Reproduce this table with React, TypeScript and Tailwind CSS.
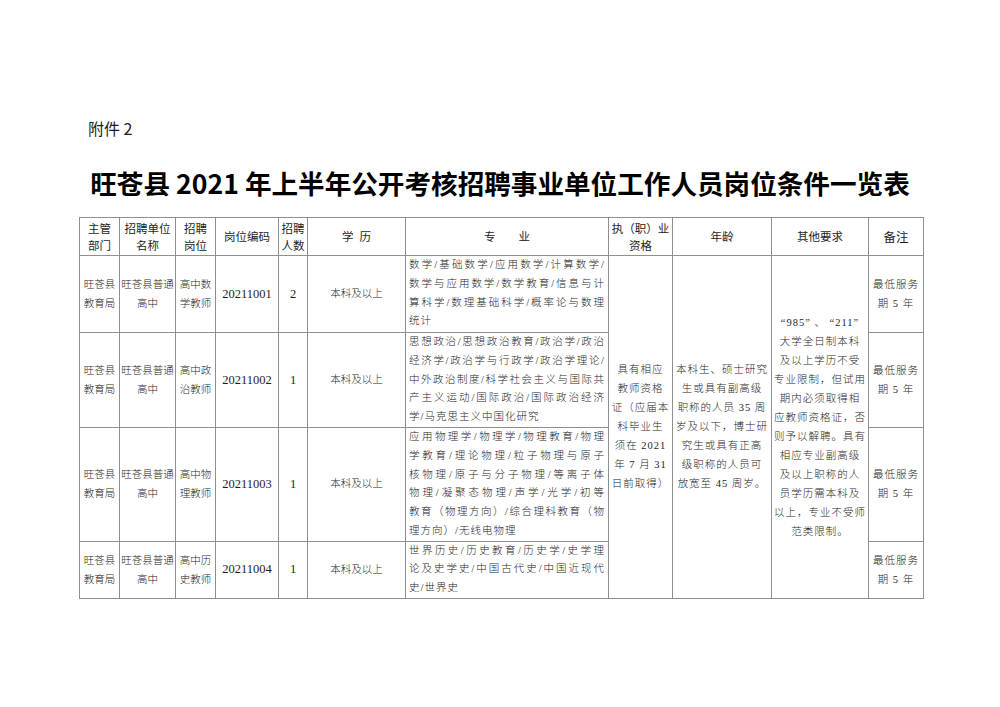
import React from "react";

const serifCjk = "font-['Liberation_Serif','Noto_Sans_CJK_SC',serif]";

const majors: string[][] = [
    [
        "数学/基础数学/应用数学/计算数学/",
        "数学与应用数学/数学教育/信息与计",
        "算科学/数理基础科学/概率论与数理",
        "统计",
    ],
    [
        "思想政治/思想政治教育/政治学/政治",
        "经济学/政治学与行政学/政治学理论/",
        "中外政治制度/科学社会主义与国际共",
        "产主义运动/国际政治/国际政治经济",
        "学/马克思主义中国化研究",
    ],
    [
        "应用物理学/物理学/物理教育/物理",
        "学教育/理论物理/粒子物理与原子",
        "核物理/原子与分子物理/等离子体",
        "物理/凝聚态物理/声学/光学/初等",
        "教育（物理方向）/综合理科教育（物",
        "理方向）/无线电物理",
    ],
    [
        "世界历史/历史教育/历史学/史学理",
        "论及史学史/中国古代史/中国近现代",
        "史/世界史",
    ],
];

const rows = [
    { post: ["高中数", "学教师"], code: "20211001", count: "2", h: "h-[77px]" },
    { post: ["高中政", "治教师"], code: "20211002", count: "1", h: "h-[95px]" },
    { post: ["高中物", "理教师"], code: "20211003", count: "1", h: "h-[113px]" },
    { post: ["高中历", "史教师"], code: "20211004", count: "1", h: "h-[57px]" },
];

const qualification = ["具有相应", "教师资格", "证（应届本", "科毕业生", "须在 2021", "年 7 月 31", "日前取得）"];

const age = [
    "本科生、硕士研究",
    "生或具有副高级",
    "职称的人员 35 周",
    "岁及以下，博士研",
    "究生或具有正高",
    "级职称的人员可",
    "放宽至 45 周岁。",
];

const other = [
    "“985” 、 “211”",
    "大学全日制本科",
    "及以上学历不受",
    "专业限制，但试用",
    "期内必须取得相",
    "应教师资格证，否",
    "则予以解聘。具有",
    "相应专业副高级",
    "及以上职称的人",
    "员学历需本科及",
    "以上，专业不受师",
    "范类限制。",
];

function Lines({ lines }: { lines: string[] }) {
    return (
        <div className="leading-[19px] tracking-[1px]">
            {lines.map((l) => (
                <div key={l} className="whitespace-pre">
                    {l}
                </div>
            ))}
        </div>
    );
}

function Major({ lines }: { lines: string[] }) {
    return (
        <div className="px-[3px] text-left leading-[18.75px] tracking-[1px] text-justify">
            {lines.map((l, i) => (
                <div key={l} className={i < lines.length - 1 ? "[text-align-last:justify]" : ""}>
                    {l}
                </div>
            ))}
        </div>
    );
}

const cell = "border border-[#8f8f8f] p-0 text-center align-middle";
const th = "border border-[#8f8f8f] p-0 text-center align-middle font-normal";

export default function App() {
    return (
        <div className="w-[1000px] h-[707px] overflow-hidden bg-white pt-[118px] text-[#1e1e1e] font-['Noto_Sans_CJK_SC',sans-serif]">
            <div className="pl-[88px] text-[16px] leading-[20px]">附件 2</div>
            <h1 className="mt-[28px] text-center text-[26.6px] leading-[34px] font-bold text-black">
                旺苍县 2021 年上半年公开考核招聘事业单位工作人员岗位条件一览表
            </h1>
            <table className="mt-[17px] ml-[79px] w-[844px] table-fixed border-collapse">
                <colgroup>
                    <col className="w-[40px]" />
                    <col className="w-[56px]" />
                    <col className="w-[40px]" />
                    <col className="w-[63px]" />
                    <col className="w-[29px]" />
                    <col className="w-[98px]" />
                    <col className="w-[203px]" />
                    <col className="w-[64px]" />
                    <col className="w-[99px]" />
                    <col className="w-[97px]" />
                    <col className="w-[55px]" />
                </colgroup>
                <thead>
                    <tr className="h-[38px] text-[11.5px] leading-[17px]">
                        <th className={th}>主管<br />部门</th>
                        <th className={th}>招聘单位<br />名称</th>
                        <th className={th}>招聘<br />岗位</th>
                        <th className={th}>岗位编码</th>
                        <th className={th}>招聘<br />人数</th>
                        <th className={th}>
                            学<span className="inline-block w-[6px]" />历
                        </th>
                        <th className={th}>专　　业</th>
                        <th className={th}>执（职）业<br />资格</th>
                        <th className={th}>年龄</th>
                        <th className={th}>其他要求</th>
                        <th className={`${th} font-bold text-[12.5px]`}>备注</th>
                    </tr>
                </thead>
                <tbody className={`${serifCjk} text-[10.5px] font-light`}>
                    {rows.map((r, i) => (
                        <tr key={r.code} className={r.h}>
                            <td className={`${cell} leading-[19px]`}>旺苍县<br />教育局</td>
                            <td className={`${cell} leading-[19px]`}>旺苍县普通<br />高中</td>
                            <td className={`${cell} leading-[19px]`}>{r.post[0]}<br />{r.post[1]}</td>
                            <td className={`${cell} text-[12.5px]`}>{r.code}</td>
                            <td className={`${cell} text-[12.5px]`}>{r.count}</td>
                            <td className={cell}>本科及以上</td>
                            <td className={`${cell} align-top`}>
                                <Major lines={majors[i]} />
                            </td>
                            {i === 0 && (
                                <>
                                    <td rowSpan={4} className={cell}>
                                        <Lines lines={qualification} />
                                    </td>
                                    <td rowSpan={4} className={cell}>
                                        <Lines lines={age} />
                                    </td>
                                    <td rowSpan={4} className={cell}>
                                        <Lines lines={other} />
                                    </td>
                                </>
                            )}
                            <td className={cell}>
                                <div className="leading-[19px] tracking-[1px]">
                                    最低服务<br />期 5 年
                                </div>
                            </td>
                        </tr>
                    ))}
                </tbody>
            </table>
        </div>
    );
}
